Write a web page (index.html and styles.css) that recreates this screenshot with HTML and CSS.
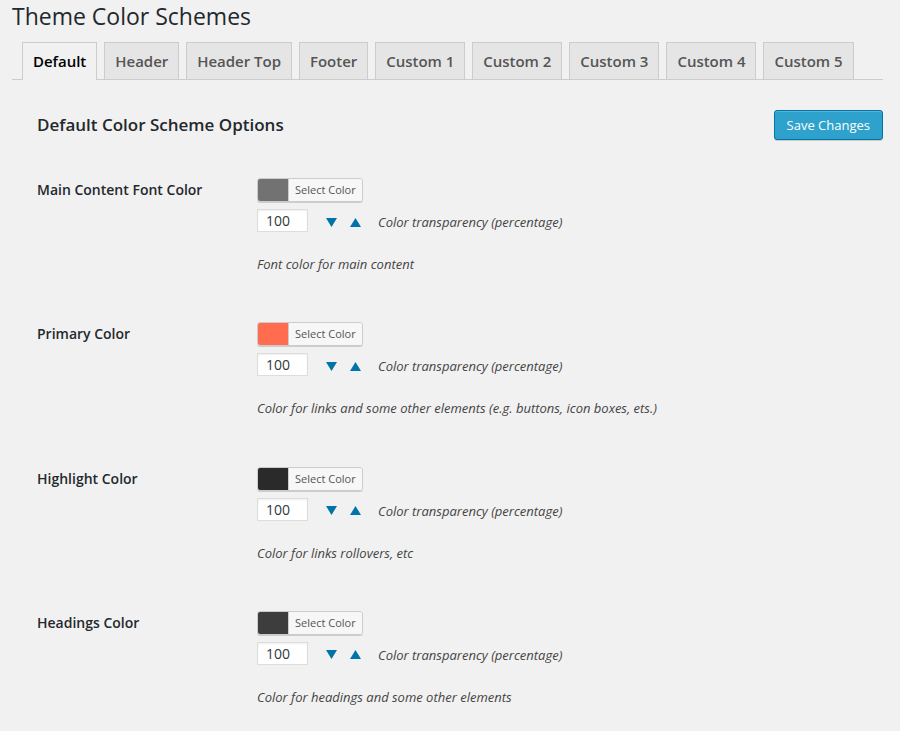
FILE: index.html
```html
<!DOCTYPE html>
<html>
<head>
<meta charset="utf-8">
<link rel="stylesheet" href="styles.css">
</head>
<body>
<div class="wrap">
  <h1 class="title">Theme Color Schemes</h1>
  <nav class="tabs">
    <a class="tab active">Default</a>
    <a class="tab">Header</a>
    <a class="tab">Header Top</a>
    <a class="tab">Footer</a>
    <a class="tab">Custom 1</a>
    <a class="tab">Custom 2</a>
    <a class="tab">Custom 3</a>
    <a class="tab">Custom 4</a>
    <a class="tab">Custom 5</a>
  </nav>
  <div class="panel">
    <div class="panel-head">
      <h2 class="section-title">Default Color Scheme Options</h2>
      <button class="btn-primary">Save Changes</button>
    </div>

    <div class="row">
      <div class="label">Main Content Font Color</div>
      <div class="field">
        <div class="picker"><span class="swatch swatch-main"></span><span class="picker-text">Select Color</span></div>
        <div class="alpha">
          <input class="num" type="text" value="100">
          <span class="arrows">
            <svg class="arrow" width="11" height="9" viewBox="0 0 11 9"><polygon points="0,0 11,0 5.5,9"/></svg>
            <svg class="arrow" width="11" height="9" viewBox="0 0 11 9"><polygon points="0,9 11,9 5.5,0"/></svg>
          </span>
          <span class="hint">Color transparency (percentage)</span>
        </div>
        <p class="desc">Font color for main content</p>
      </div>
    </div>

    <div class="row">
      <div class="label">Primary Color</div>
      <div class="field">
        <div class="picker"><span class="swatch swatch-primary"></span><span class="picker-text">Select Color</span></div>
        <div class="alpha">
          <input class="num" type="text" value="100">
          <span class="arrows">
            <svg class="arrow" width="11" height="9" viewBox="0 0 11 9"><polygon points="0,0 11,0 5.5,9"/></svg>
            <svg class="arrow" width="11" height="9" viewBox="0 0 11 9"><polygon points="0,9 11,9 5.5,0"/></svg>
          </span>
          <span class="hint">Color transparency (percentage)</span>
        </div>
        <p class="desc">Color for links and some other elements (e.g. buttons, icon boxes, ets.)</p>
      </div>
    </div>

    <div class="row">
      <div class="label">Highlight Color</div>
      <div class="field">
        <div class="picker"><span class="swatch swatch-highlight"></span><span class="picker-text">Select Color</span></div>
        <div class="alpha">
          <input class="num" type="text" value="100">
          <span class="arrows">
            <svg class="arrow" width="11" height="9" viewBox="0 0 11 9"><polygon points="0,0 11,0 5.5,9"/></svg>
            <svg class="arrow" width="11" height="9" viewBox="0 0 11 9"><polygon points="0,9 11,9 5.5,0"/></svg>
          </span>
          <span class="hint">Color transparency (percentage)</span>
        </div>
        <p class="desc">Color for links rollovers, etc</p>
      </div>
    </div>

    <div class="row">
      <div class="label">Headings Color</div>
      <div class="field">
        <div class="picker"><span class="swatch swatch-headings"></span><span class="picker-text">Select Color</span></div>
        <div class="alpha">
          <input class="num" type="text" value="100">
          <span class="arrows">
            <svg class="arrow" width="11" height="9" viewBox="0 0 11 9"><polygon points="0,0 11,0 5.5,9"/></svg>
            <svg class="arrow" width="11" height="9" viewBox="0 0 11 9"><polygon points="0,9 11,9 5.5,0"/></svg>
          </span>
          <span class="hint">Color transparency (percentage)</span>
        </div>
        <p class="desc">Color for headings and some other elements</p>
      </div>
    </div>
  </div>
</div>
</body>
</html>
```

FILE: styles.css
```css
* { box-sizing: border-box; }
html, body {
  margin: 0;
  padding: 0;
  background: #f1f1f1;
  font-family: "Open Sans", "Liberation Sans", sans-serif;
  color: #444;
  font-size: 13px;
}
.wrap {
  margin: 0 17px 0 12px;
}
.title {
  margin: 1px 0 11px;
  font-size: 23px;
  line-height: 30px;
  font-weight: 400;
  color: #23282d;
}
.tabs {
  display: flex;
  gap: 7px;
  padding-left: 10px;
  border-bottom: 1px solid #ccc;
}
.tab {
  display: block;
  border: 1px solid #ccc;
  border-bottom: none;
  background: #e5e5e5;
  color: #555;
  font-size: 15px;
  font-weight: 600;
  line-height: 24px;
  padding: 6px 10px;
  margin-bottom: -1px;
  height: 37px;
  letter-spacing: -0.02px;
}
.tab.active {
  background: #f1f1f1;
  color: #000;
  height: 38px;
}
.panel {
  padding: 29px 0 0 25px;
}
.panel-head {
  display: flex;
  justify-content: space-between;
  align-items: center;
  height: 31px;
}
.section-title {
  margin: 0;
  font-size: 17px;
  font-weight: 600;
  color: #23282d;
}
.btn-primary {
  font-family: inherit;
  font-size: 13px;
  height: 30px;
  line-height: 28px;
  padding: 0 12px 2px;
  background: #2ea2cc;
  border: 1px solid #0074a2;
  border-radius: 3px;
  color: #fff;
  box-shadow: inset 0 1px 0 rgba(120,200,230,.5), 0 1px 0 rgba(0,0,0,.15);
}
.row {
  display: flex;
  padding: 15px 0;
  height: 144.34px;
}
.panel-head + .row { margin-top: 23px; }
.label {
  width: 220px;
  flex: none;
  padding-top: 3px;
  font-size: 14px;
  font-weight: 600;
  line-height: 18px;
  color: #23282d;
}
.field {
  display: flex;
  flex-direction: column;
  align-items: flex-start;
}
.picker {
  display: flex;
  height: 24px;
  border: 1px solid #ccc;
  border-radius: 3px;
  overflow: hidden;
  margin-bottom: 7px;
  box-shadow: 0 1px 0 #ccc;
}
.swatch {
  width: 30px;
  height: 100%;
}
.swatch-main { background: #727272; }
.swatch-primary { background: #ff6c4f; }
.swatch-highlight { background: #2a2a2a; }
.swatch-headings { background: #3d3d3d; }
.picker-text {
  font-size: 11px;
  line-height: 22px;
  padding: 0 6px;
  border-left: 1px solid #ccc;
  background: #f7f7f7;
  color: #555;
}
.alpha {
  display: flex;
  align-items: center;
  height: 23px;
}
.num {
  width: 51px;
  height: 23px;
  border: 1px solid #ddd;
  background: #fff;
  box-shadow: inset 0 1px 2px rgba(0,0,0,.07);
  font-family: inherit;
  font-size: 14px;
  color: #32373c;
  padding: 0 8px;
  margin: 0;
}
.arrows {
  display: flex;
  gap: 13px;
  margin-left: 18px;
  margin-top: 3px;
}
.arrow { fill: #0073aa; display: block; }
.hint {
  margin-left: 17px;
  margin-top: 3px;
  font-style: italic;
  font-size: 13px;
  color: #444;
}
.desc {
  margin: 22px 0 0;
  font-style: italic;
  font-size: 13px;
  line-height: 20px;
  color: #444;
}
```
